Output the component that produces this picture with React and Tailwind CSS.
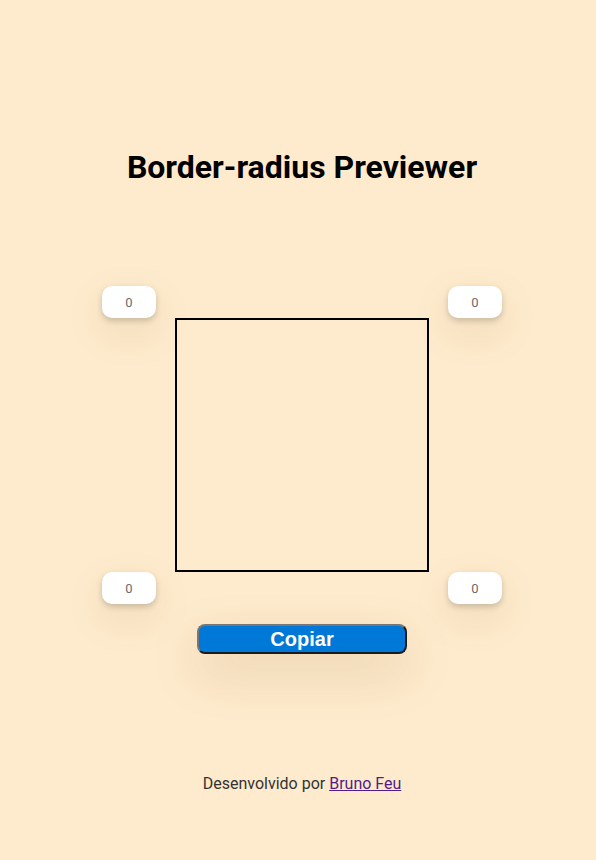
import { useState } from "react";

const corners = ["topLeft", "topRight", "bottomLeft", "bottomRight"];

const RadiusInput = ({ value, onChange, align }) => (
  <div className={`flex ${align === "right" ? "justify-end" : "justify-start"}`}>
    <input
      type="text"
      value={value}
      onChange={(e) => onChange(e.target.value)}
      className="w-[54px] h-[32px] rounded-[10px] bg-white text-center text-[13px] text-[#6b6b6b] outline-none shadow-[0_3px_6px_rgba(0,0,0,0.18),0_14px_40px_rgba(120,80,20,0.12)] font-['Roboto',sans-serif]"
    />
  </div>
);

const App = () => {
  const [radius, setRadius] = useState({
    topLeft: "0",
    topRight: "0",
    bottomLeft: "0",
    bottomRight: "0",
  });

  const update = (key) => (val) => setRadius({ ...radius, [key]: val });

  const css = corners.map((c) => `${radius[c] || 0}px`).join(" ");

  return (
    <div className="min-h-[860px] bg-[#feebcd] pl-2 font-['Roboto',sans-serif]">
      <div className="flex flex-col items-center pt-[147px]">
        <h1 className="text-[32px] font-bold text-black leading-[40px]">
          Border-radius Previewer
        </h1>

        {/* Preview grid */}
        <div className="mt-[99px] grid grid-cols-[73px_254px_73px] grid-rows-[32px_254px_32px]">
          <RadiusInput value={radius.topLeft} onChange={update("topLeft")} />
          <div />
          <RadiusInput value={radius.topRight} onChange={update("topRight")} align="right" />

          <div />
          <div
            className="border-2 border-black"
            style={{ borderRadius: `${radius.topLeft}px ${radius.topRight}px ${radius.bottomRight}px ${radius.bottomLeft}px` }}
          />
          <div />

          <RadiusInput value={radius.bottomLeft} onChange={update("bottomLeft")} />
          <div />
          <RadiusInput value={radius.bottomRight} onChange={update("bottomRight")} align="right" />
        </div>

        {/* Copy button */}
        <button
          onClick={() => navigator.clipboard?.writeText(`border-radius: ${css};`)}
          className="mt-[20px] w-[210px] h-[30px] rounded-[8px] bg-[#0078d7] border-2 border-t-[#777] border-l-[#777] border-r-[#1a1a1a] border-b-[#1a1a1a] text-white text-[20px] font-bold leading-none font-['Liberation_Sans',Arial,sans-serif] shadow-[0_18px_50px_rgba(120,80,20,0.18)]"
        >
          Copiar
        </button>

        <footer className="mt-[118px] text-[16px] text-[#333]">
          Desenvolvido por{" "}
          <a href="#" className="text-[#551a8b] underline">
            Bruno Feu
          </a>
        </footer>
      </div>
    </div>
  );
};

export default App;
